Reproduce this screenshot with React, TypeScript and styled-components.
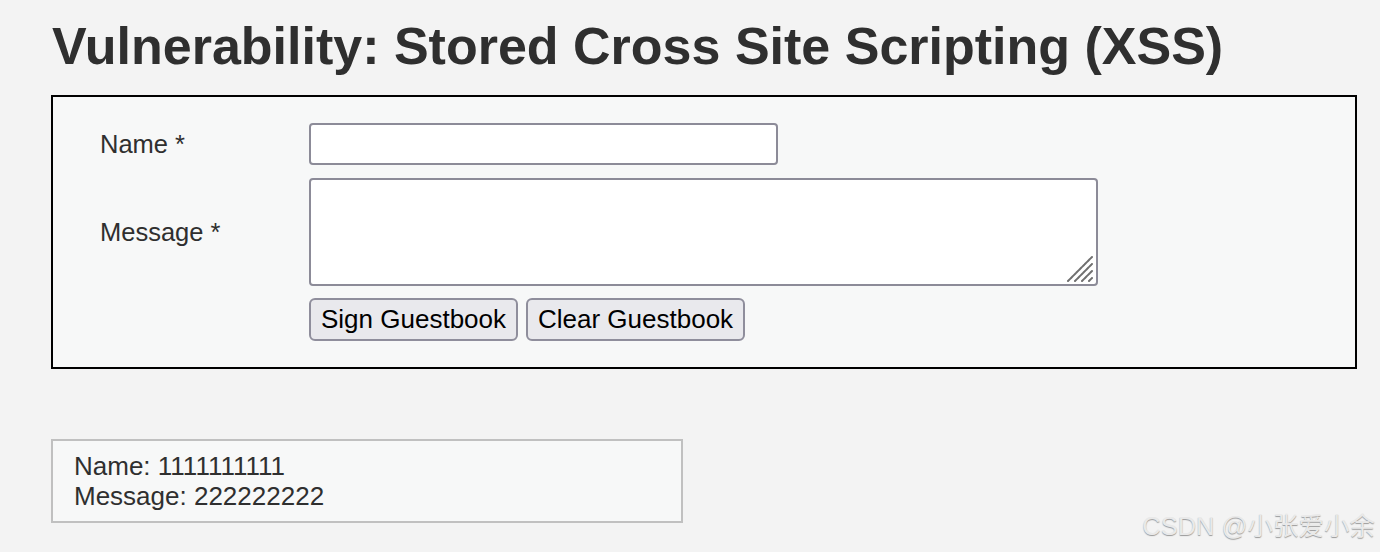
import React from "react";
import styled, { createGlobalStyle } from "styled-components";

const Global = createGlobalStyle`
  html, body { margin: 0; padding: 0; background: #f3f3f3; }
  body { font-family: "Liberation Sans", Arial, sans-serif; color: #2f2f2f; }
`;

const Page = styled.div`
  width: 1380px;
  height: 552px;
  padding: 0 23px 0 51px;
  box-sizing: border-box;
  position: relative;
  overflow: hidden;
`;

const Title = styled.h1`
  margin: 0;
  padding: 16px 0 0 1px;
  height: 95px;
  box-sizing: border-box;
  font-size: 52px;
  font-weight: 700;
  line-height: 60px;
  color: #2f2f2f;
  white-space: nowrap;
`;

const FormBox = styled.div`
  border: 2px solid #000;
  background: #f7f8f8;
  padding: 26px 0 26px 47px;
  display: grid;
  grid-template-columns: 209px 1fr;
  row-gap: 13px;
  align-items: center;
`;

const Label = styled.div`
  font-size: 25.5px;
  color: #2f2f2f;
`;

const TextInput = styled.input`
  width: 469px;
  height: 42px;
  box-sizing: border-box;
  border: 2px solid #8c8b98;
  border-radius: 4px;
  background: #fff;
  font-size: 22px;
`;

const AreaWrap = styled.div`
  position: relative;
  width: 789px;
  height: 108px;
`;

const TextArea = styled.textarea`
  width: 789px;
  height: 108px;
  box-sizing: border-box;
  border: 2px solid #8c8b98;
  border-radius: 4px;
  background: #fff;
  display: block;
  font-size: 22px;
  resize: none;
`;

const Grip = styled.svg`
  position: absolute;
  right: 5px;
  bottom: 4px;
  width: 27px;
  height: 27px;
  pointer-events: none;
`;

const ButtonRow = styled.div`
  grid-column: 2;
  display: flex;
  gap: 8px;
  margin-top: -1px;
`;

const Button = styled.button`
  height: 43px;
  padding: 0 10px;
  box-sizing: border-box;
  border: 2px solid #8f8e9c;
  border-radius: 6px;
  background: #e9e9ed;
  color: #000;
  font-family: "Liberation Sans", Arial, sans-serif;
  font-size: 26px;
`;

const Entry = styled.div`
  margin-top: 70px;
  width: 632px;
  box-sizing: border-box;
  border: 2px solid #c0c0c0;
  background: #f7f8f8;
  padding: 10px 21px 10px;
  font-size: 26px;
  line-height: 30px;
  color: #2f2f2f;
`;

const Watermark = styled.div`
  position: absolute;
  right: 5px;
  bottom: 10px;
  font-family: "Liberation Sans", "Noto Sans CJK SC", sans-serif;
  font-size: 25.5px;
  color: #e9e9e9;
  text-shadow: 0 1px 1px #9a9a9a;
`;

export default function App() {
  return (
    <>
      <Global />
      <Page>
        <Title>Vulnerability: Stored Cross Site Scripting (XSS)</Title>
        <FormBox>
          <Label>Name *</Label>
          <TextInput type="text" />
          <Label>Message *</Label>
          <AreaWrap>
            <TextArea />
            <Grip viewBox="0 0 27 27">
              <g stroke="#6f6f6f" strokeWidth="2" strokeLinecap="round" strokeDasharray="3 1">
                <line x1="2" y1="26" x2="26" y2="2" />
                <line x1="9" y1="26" x2="26" y2="9" />
                <line x1="16" y1="26" x2="26" y2="16" />
                <line x1="23" y1="26" x2="26" y2="23" />
              </g>
            </Grip>
          </AreaWrap>
          <ButtonRow>
            <Button>Sign Guestbook</Button>
            <Button>Clear Guestbook</Button>
          </ButtonRow>
        </FormBox>
        <Entry>
          Name: 1111111111
          <br />
          Message: 222222222
        </Entry>
        <Watermark>CSDN @小张爱小余</Watermark>
      </Page>
    </>
  );
}
